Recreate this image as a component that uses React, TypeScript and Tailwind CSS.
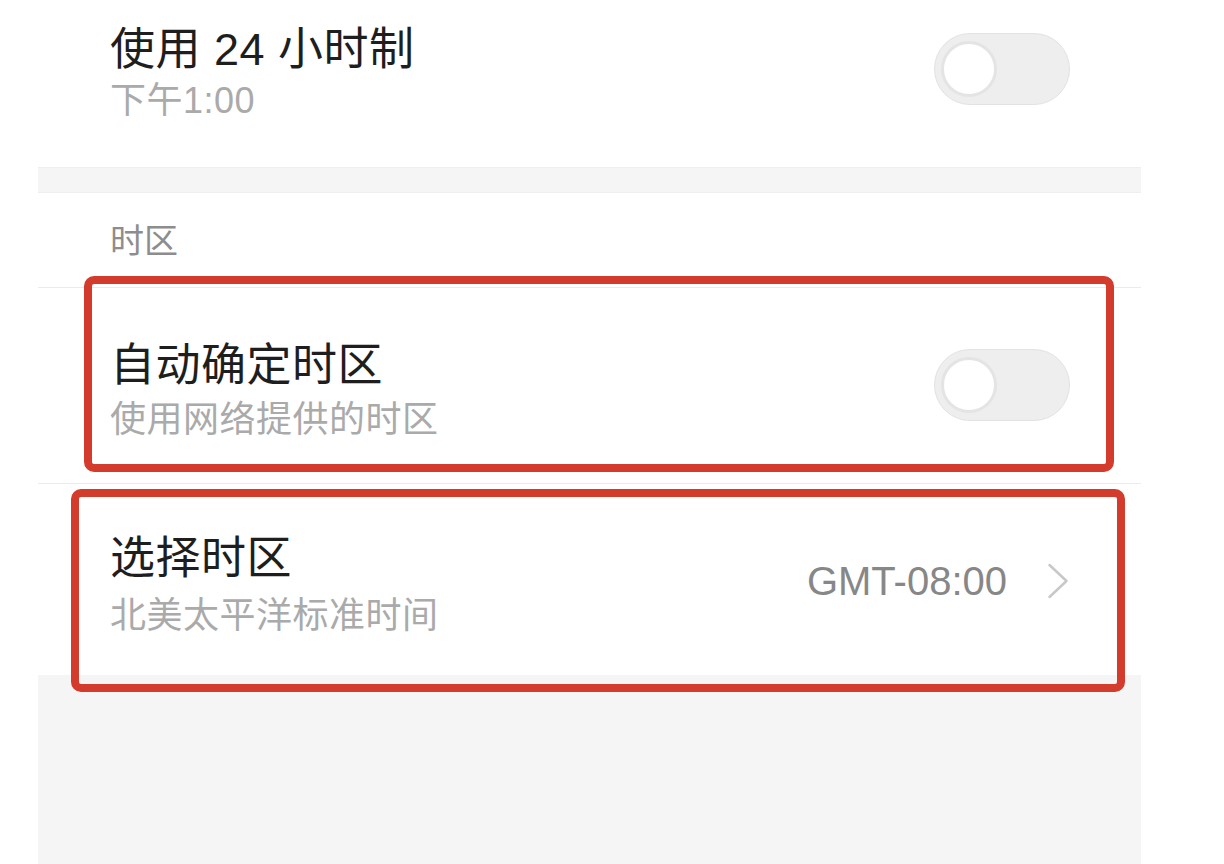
import { ReactNode } from "react";

const cjk = "font-['Liberation_Sans','Noto_Sans_CJK_SC',sans-serif]";

function Toggle({ className = "" }: { className?: string }) {
    return (
        <div
            className={`flex h-[72px] w-[136px] shrink-0 items-center rounded-full border border-[#e2e2e2] bg-[#eeeeee] pl-[6px] ${className}`}
        >
            <div className="h-[56px] w-[56px] rounded-full border-[3px] border-[#e4e4e4] bg-white" />
        </div>
    );
}

function Chevron() {
    return (
        <svg width="22" height="36" viewBox="0 0 22 36" className="shrink-0">
            <polyline
                points="2.5,2 19.5,18 2.5,34"
                fill="none"
                stroke="#c8c8c8"
                strokeWidth="2.5"
                strokeLinecap="round"
                strokeLinejoin="round"
            />
        </svg>
    );
}

interface RowProps {
    title: string;
    subtitle: string;
    right: ReactNode;
    className?: string;
    subGap: string;
}

function Row({ title, subtitle, right, className = "", subGap }: RowProps) {
    return (
        <div className={`flex items-start justify-between bg-white pl-[72px] pr-[71px] ${className}`}>
            <div className="flex flex-col">
                <div className={`${cjk} text-[45px] leading-[56px] tracking-[0.5px] text-[#1e1e1e]`}>{title}</div>
                <div className={`${cjk} ${subGap} text-[36px] leading-[44px] tracking-[0.5px] text-[#aaaaaa]`}>
                    {subtitle}
                </div>
            </div>
            {right}
        </div>
    );
}

export default function App() {
    return (
        <div className="min-h-screen bg-white">
            <div className="relative ml-[38px] flex min-h-[864px] w-[1103px] flex-col bg-[#f5f5f6]">
                <Row
                    title="使用 24 小时制"
                    subtitle="下午1:00"
                    className="h-[167px] pt-[22px]"
                    subGap="mt-[1px]"
                    right={<Toggle className="mt-[11px]" />}
                />

                <div className="h-[26px] border-y border-[#efefef] bg-[#f5f5f5]" />

                <div className="h-[94px] bg-white pl-[72px] pt-[28px]">
                    <div className={`${cjk} text-[34px] leading-[40px] text-[#8d8d8d]`}>时区</div>
                </div>

                <Row
                    title="自动确定时区"
                    subtitle="使用网络提供的时区"
                    className="h-[196px] border-t border-[#ebebeb] pt-[50px]"
                    subGap="mt-[4px]"
                    right={<Toggle className="mt-[11px]" />}
                />

                <Row
                    title="选择时区"
                    subtitle="北美太平洋标准时间"
                    className="h-[192px] border-t border-[#ebebeb] pt-[47px]"
                    subGap="mt-[7px]"
                    right={
                        <div className="mt-[28px] flex items-center gap-[40px] pr-[1px]">
                            <span className="font-['Liberation_Sans',sans-serif] text-[40px] leading-[44px] text-[#878787]">
                                GMT-08:00
                            </span>
                            <Chevron />
                        </div>
                    }
                />

                {/* annotation boxes */}
                <div className="pointer-events-none absolute left-[46px] top-[276px] h-[196px] w-[1030px] rounded-[10px] border-[8px] border-[#d33b2c]" />
                <div className="pointer-events-none absolute left-[33px] top-[489px] h-[203px] w-[1054px] rounded-[10px] border-[8px] border-[#d33b2c]" />
            </div>
        </div>
    );
}
